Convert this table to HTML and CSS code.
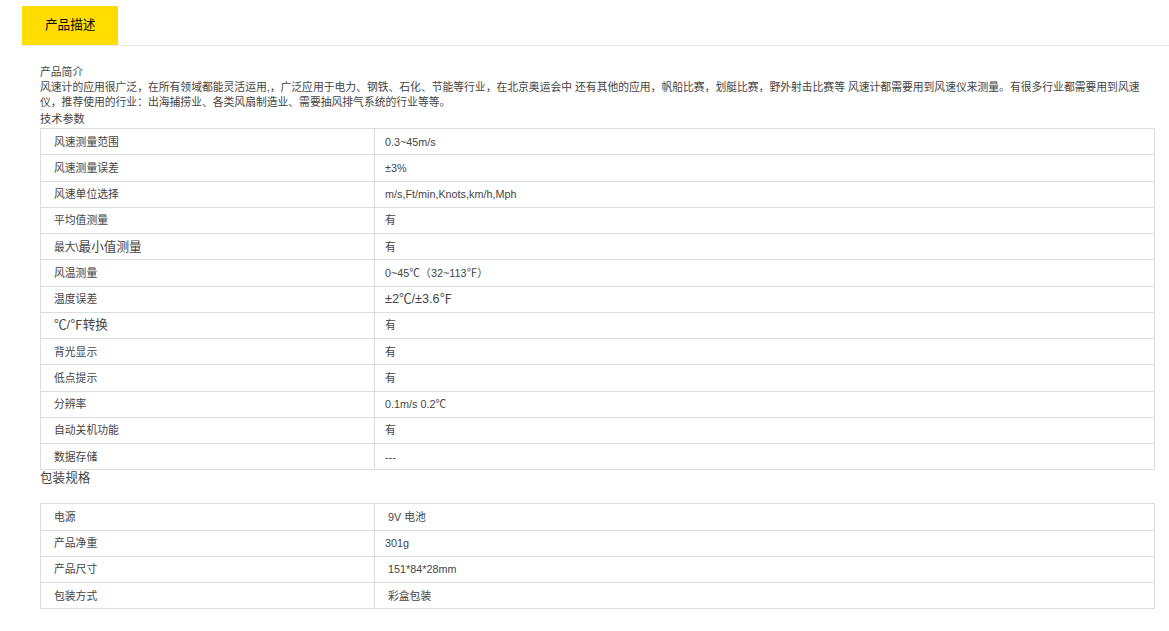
FILE: index.html
```html
<!DOCTYPE html>
<html lang="zh-CN">
<head>
<meta charset="utf-8">
<title>产品描述</title>
<link rel="stylesheet" href="styles.css">
</head>
<body>
<div class="tabs">
  <div class="tab">产品描述</div>
</div>
<div class="content">
  <div class="intro">
    <p>产品简介</p>
    <p>风速计的应用很广泛，在所有领域都能灵活运用,，广泛应用于电力、钢铁、石化、节能等行业，在北京奥运会中 还有其他的应用，帆船比赛，划艇比赛，野外射击比赛等 风速计都需要用到风速仪来测量。有很多行业都需要用到风速仪，推荐使用的行业：出海捕捞业、各类风扇制造业、需要抽风排气系统的行业等等。</p>
  </div>
  <p class="sub">技术参数</p>
  <table class="spec">
    <tr><td>风速测量范围</td><td>0.3~45m/s</td></tr>
    <tr><td>风速测量误差</td><td>±3%</td></tr>
    <tr><td>风速单位选择</td><td>m/s,Ft/min,Knots,km/h,Mph</td></tr>
    <tr><td>平均值测量</td><td>有</td></tr>
    <tr><td>最大\<span class="big">最小值测量</span></td><td>有</td></tr>
    <tr><td>风温测量</td><td>0~45℃（32~113℉）</td></tr>
    <tr><td>温度误差</td><td><span class="big">±2℃/±3.6℉</span></td></tr>
    <tr><td><span class="big">℃/℉转换</span></td><td>有</td></tr>
    <tr><td>背光显示</td><td>有</td></tr>
    <tr><td>低点提示</td><td>有</td></tr>
    <tr><td>分辨率</td><td>0.1m/s 0.2℃</td></tr>
    <tr><td>自动关机功能</td><td>有</td></tr>
    <tr><td>数据存储</td><td>---</td></tr>
  </table>
  <p class="pack">包装规格</p>
  <table class="spec">
    <tr><td>电源</td><td>&nbsp;9V 电池</td></tr>
    <tr><td>产品净重</td><td>301g</td></tr>
    <tr><td>产品尺寸</td><td>&nbsp;151*84*28mm</td></tr>
    <tr><td>包装方式</td><td>&nbsp;彩盒包装</td></tr>
  </table>
</div>
</body>
</html>
```
FILE: styles.css
```css
html, body {
  margin: 0;
  padding: 0;
  background: #fff;
}
body {
  font-family: "Liberation Sans", "Noto Sans CJK SC", sans-serif;
  color: #444;
  font-size: 10.8px;
}
p {
  margin: 0;
}
.tabs {
  margin: 6px 0 0 22px;
  border-bottom: 1px solid #e8e8e8;
  display: flex;
}
.tab {
  width: 73px;
  height: 39px;
  padding-left: 23px;
  background: #ffdd00;
  color: #000;
  font-size: 12.6px;
  line-height: 39px;
}
.content {
  padding: 19px 0 0 40px;
  width: 1115px;
}
.intro {
  width: 1106px;
  line-height: 15px;
}
.sub {
  font-size: 11.2px;
  line-height: 18px;
}
.spec {
  border-collapse: collapse;
  width: 1115px;
  table-layout: fixed;
}
.spec td {
  border: 1px solid #ddd;
  height: 25.25px;
  line-height: 14px;
  padding: 0 0 0 13px;
  vertical-align: middle;
  white-space: nowrap;
}
.spec td:first-child {
  width: 320px;
}
.spec td + td {
  padding-left: 10px;
}
.big {
  font-size: 12.6px;
}
.pack {
  font-size: 12.6px;
  line-height: 17px;
  margin-bottom: 16px;
}
```
